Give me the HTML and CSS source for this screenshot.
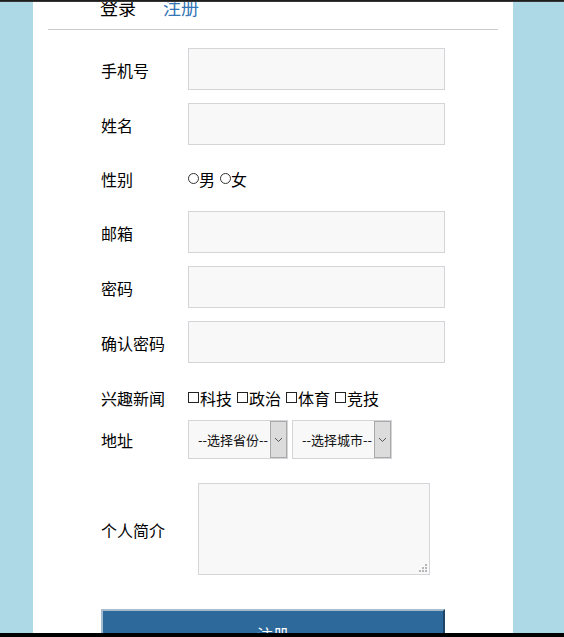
FILE: index.html
```html
<!DOCTYPE html>
<html lang="zh">
<head>
<meta charset="utf-8">
<title>注册</title>
<link rel="stylesheet" href="styles.css">
</head>
<body>
<div class="frame-top"></div>
<div class="frame-bottom"></div>
<div class="panel">
  <div class="tabs">
    <span class="tab tab-login">登录</span>
    <span class="tab tab-reg">注册</span>
  </div>
  <form class="form">
    <div class="row">
      <label class="lbl">手机号</label>
      <input class="field" type="text">
    </div>
    <div class="row">
      <label class="lbl">姓名</label>
      <input class="field" type="text">
    </div>
    <div class="row row-radio">
      <span class="lbl">性别</span>
      <span class="opts">
        <label class="opt"><input class="radio" type="radio" name="sex">男</label>
        <label class="opt"><input class="radio" type="radio" name="sex">女</label>
      </span>
    </div>
    <div class="row">
      <label class="lbl">邮箱</label>
      <input class="field" type="text">
    </div>
    <div class="row">
      <label class="lbl">密码</label>
      <input class="field" type="password">
    </div>
    <div class="row">
      <label class="lbl">确认密码</label>
      <input class="field" type="password">
    </div>
    <div class="row row-check">
      <span class="lbl">兴趣新闻</span>
      <span class="opts">
        <label class="opt"><input class="check" type="checkbox">科技</label>
        <label class="opt"><input class="check" type="checkbox">政治</label>
        <label class="opt"><input class="check" type="checkbox">体育</label>
        <label class="opt"><input class="check" type="checkbox">竞技</label>
      </span>
    </div>
    <div class="row row-addr">
      <span class="lbl">地址</span>
      <span class="selects">
        <span class="sel-wrap">
          <select class="sel"><option>--选择省份--</option></select>
          <span class="sel-btn"><svg width="9" height="6" viewBox="0 0 9 6"><path d="M1 1 L4.5 4.5 L8 1" fill="none" stroke="#555" stroke-width="1"/></svg></span>
        </span>
        <span class="sel-wrap">
          <select class="sel"><option>--选择城市--</option></select>
          <span class="sel-btn"><svg width="9" height="6" viewBox="0 0 9 6"><path d="M1 1 L4.5 4.5 L8 1" fill="none" stroke="#555" stroke-width="1"/></svg></span>
        </span>
      </span>
    </div>
    <div class="row row-intro">
      <label class="lbl">个人简介</label>
      <span class="intro-wrap">
        <textarea class="intro"></textarea>
        <svg class="grip" width="8" height="8" viewBox="0 0 8 8">
          <rect x="6" y="0" width="2" height="2" fill="#b5b5b5"/>
          <rect x="3" y="3" width="2" height="2" fill="#b5b5b5"/>
          <rect x="6" y="3" width="2" height="2" fill="#b5b5b5"/>
          <rect x="0" y="6" width="2" height="2" fill="#b5b5b5"/>
          <rect x="3" y="6" width="2" height="2" fill="#b5b5b5"/>
          <rect x="6" y="6" width="2" height="2" fill="#b5b5b5"/>
        </svg>
      </span>
    </div>
    <div class="row-submit">
      <button class="submit" type="button">注册</button>
    </div>
  </form>
</div>
</body>
</html>
```
FILE: styles.css
```css
html, body {
  margin: 0;
  padding: 0;
  background: #add8e6;
  overflow: hidden;
  height: 637px;
}
body {
  font-family: "Noto Sans CJK SC", "Noto Sans", sans-serif;
  font-size: 16px;
  color: #000;
}
.frame-top {
  position: fixed;
  top: 0; left: 0; right: 0;
  height: 2px;
  background: linear-gradient(#111, #444);
  z-index: 5;
}
.frame-bottom {
  position: fixed;
  bottom: 0; left: 0; right: 0;
  height: 4px;
  background: #000;
  z-index: 5;
}
.panel {
  width: 480px;
  margin-left: 33px;
  background: #fff;
  height: 680px;
  margin-top: -13px;
}
.tabs {
  margin: 0 15px;
  padding: 9px 0 0 52px;
  height: 43px;
  border-bottom: 1px solid #cccccc;
  box-sizing: border-box;
  display: flex;
  gap: 27px;
  align-items: flex-start;
  font-size: 18px;
  line-height: 22px;
}
.tab-login { color: #000; }
.tab-reg { color: #3575b5; }

.form {
  padding: 18px 0 0 68px;
  display: flex;
  flex-direction: column;
}
.row {
  display: flex;
  align-items: center;
  height: 42px;
  margin-bottom: 13px;
}
.lbl {
  width: 87px;
  flex: none;
  line-height: 20px;
  padding-top: 1px;
}
.field {
  width: 257px;
  height: 42px;
  box-sizing: border-box;
  border: 1px solid #d3d5d8;
  background: #f8f8f8;
  margin: 0;
  padding: 0 8px;
  font: inherit;
  outline: none;
}
.row-radio {
  height: 40px;
  margin-bottom: 13px;
}
.opts {
  display: flex;
  align-items: center;
  gap: 5px;
  padding-top: 1px;
}
.opt {
  display: inline-flex;
  align-items: center;
  line-height: 20px;
}
.radio {
  appearance: none;
  -webkit-appearance: none;
  width: 11px;
  height: 11px;
  border: 1px solid #333;
  border-radius: 50%;
  margin: 0;
  box-sizing: border-box;
  background: #fff;
}
.check {
  appearance: none;
  -webkit-appearance: none;
  width: 11px;
  height: 11px;
  border: 1px solid #222;
  margin: 0 1px 0 0;
  box-sizing: border-box;
  background: #fff;
}
.row-check {
  height: 41px;
  margin-bottom: 3px;
}
.row-check .lbl { padding-top: 2px; }
.row-check .opts { padding-top: 2px; }
.row-addr {
  height: 39px;
  margin-bottom: 24px;
}
.selects {
  display: flex;
  gap: 4px;
}
.sel-wrap {
  position: relative;
  display: inline-block;
  width: 100px;
  height: 39px;
}
.sel {
  appearance: none;
  -webkit-appearance: none;
  width: 100px;
  height: 39px;
  box-sizing: border-box;
  border: 1px solid #d3d5d8;
  background: #f8f8f8;
  font-family: "Noto Sans CJK SC", sans-serif;
  font-size: 13px;
  color: #111;
  padding: 0 0 0 9px;
  margin: 0;
  border-radius: 0;
}
.sel-btn {
  position: absolute;
  top: 1px;
  right: 1px;
  width: 17px;
  height: 37px;
  box-sizing: border-box;
  border: 1px solid #a9a9a9;
  background: #dcdcdc;
  display: flex;
  align-items: center;
  justify-content: center;
}
.row-intro {
  height: 92px;
  margin-bottom: 34px;
}
.intro-wrap {
  position: relative;
  display: block;
  width: 232px;
  height: 92px;
  margin-left: 10px;
}
.intro {
  display: block;
  width: 232px;
  height: 92px;
  box-sizing: border-box;
  border: 1px solid #d3d5d8;
  background: #f8f8f8;
  margin: 0;
  resize: none;
  outline: none;
}
.grip {
  position: absolute;
  right: 3px;
  bottom: 3px;
}
.row-submit {
  display: flex;
}
.submit {
  width: 344px;
  height: 50px;
  background: #2d699b;
  color: #fff;
  font-family: inherit;
  font-size: 16px;
  border-style: solid;
  border-width: 2px;
  border-color: #a5bccf #1d4567 #1d4567 #a5bccf;
  padding: 0;
  margin: 0;
}
```
